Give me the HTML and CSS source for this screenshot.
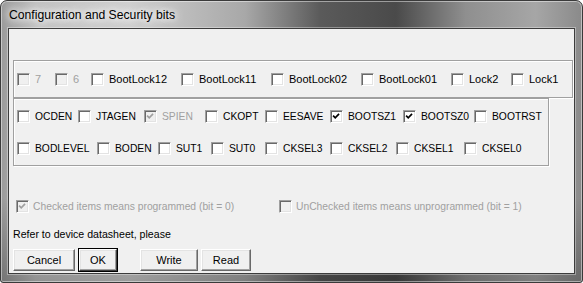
FILE: index.html
```html
<!DOCTYPE html>
<html lang="en">
<head>
  <meta charset="UTF-8">
  <title>Configuration and Security bits</title>
  <link rel="stylesheet" href="styles.css">
</head>
<body>
  <div class="window">
    <div class="titlebar">
      <span class="title">Configuration and Security bits</span>
    </div>

    <div class="client">
      <!-- Lock bits -->
      <div class="group group-lock">
        <label class="item disabled"><span class="cb"></span>7</label>
        <label class="item disabled"><span class="cb"></span>6</label>
        <label class="item"><span class="cb"></span>BootLock12</label>
        <label class="item"><span class="cb"></span>BootLock11</label>
        <label class="item"><span class="cb"></span>BootLock02</label>
        <label class="item"><span class="cb"></span>BootLock01</label>
        <label class="item"><span class="cb"></span>Lock2</label>
        <label class="item"><span class="cb"></span>Lock1</label>
      </div>

      <!-- Fuse bits -->
      <div class="group group-fuse">
        <div class="fuse-row row-high">
          <label class="item"><span class="cb"></span>OCDEN</label>
          <label class="item"><span class="cb"></span>JTAGEN</label>
          <label class="item disabled"><span class="cb"><svg viewBox="0 0 13 13"><polyline points="2.5,5.5 5,8 9.5,3.5"/></svg></span>SPIEN</label>
          <label class="item"><span class="cb"></span>CKOPT</label>
          <label class="item"><span class="cb"></span>EESAVE</label>
          <label class="item"><span class="cb"><svg viewBox="0 0 13 13"><polyline points="2.5,5.5 5,8 9.5,3.5"/></svg></span>BOOTSZ1</label>
          <label class="item"><span class="cb"><svg viewBox="0 0 13 13"><polyline points="2.5,5.5 5,8 9.5,3.5"/></svg></span>BOOTSZ0</label>
          <label class="item"><span class="cb"></span>BOOTRST</label>
        </div>
        <div class="fuse-row row-low">
          <label class="item"><span class="cb"></span>BODLEVEL</label>
          <label class="item"><span class="cb"></span>BODEN</label>
          <label class="item"><span class="cb"></span>SUT1</label>
          <label class="item"><span class="cb"></span>SUT0</label>
          <label class="item"><span class="cb"></span>CKSEL3</label>
          <label class="item"><span class="cb"></span>CKSEL2</label>
          <label class="item"><span class="cb"></span>CKSEL1</label>
          <label class="item"><span class="cb"></span>CKSEL0</label>
        </div>
      </div>

      <!-- Legend -->
      <div class="legend">
        <label class="item disabled"><span class="cb"><svg viewBox="0 0 13 13"><polyline points="2.5,5.5 5,8 9.5,3.5"/></svg></span>Checked items means programmed (bit = 0)</label>
        <label class="item disabled"><span class="cb"></span>UnChecked items means unprogrammed (bit = 1)</label>
      </div>

      <p class="note">Refer to device datasheet, please</p>

      <div class="buttons">
        <button class="btn btn-cancel">Cancel</button>
        <button class="btn btn-ok default">OK</button>
        <button class="btn btn-write">Write</button>
        <button class="btn btn-read">Read</button>
      </div>
    </div>
  </div>
</body>
</html>
```

FILE: styles.css
```css
/* Global styling */
* {
  margin: 0;
  padding: 0;
  box-sizing: border-box;
}

body {
  width: 583px;
  height: 283px;
  background: #fff;
  font-family: 'Liberation Sans', Arial, sans-serif;
  font-size: 11px;
  color: #000;
  overflow: hidden;
}

/* Window frame */
.window {
  width: 583px;
  height: 283px;
  padding: 0 7px 9px;
  border: 1px solid #3a3a3a;
  border-radius: 7px 7px 3px 3px;
  background:
    linear-gradient(to bottom, rgba(255, 255, 255, 0) 0, rgba(255, 255, 255, 0) 70%, rgba(0, 0, 0, 0.25) 100%),
    linear-gradient(to right, #9a9a9a 0, #c2c2c2 6%, #cfcfcf 22%, #a8a8a8 42%, #5a5a5a 55%, #4a4a4a 68%, #8f8f8f 80%, #a6a6a6 92%, #8a8a8a 100%);
  box-shadow: inset 0 0 0 1px rgba(255, 255, 255, 0.45);
}

.titlebar {
  height: 27px;
  display: flex;
  align-items: center;
  padding-left: 1px;
}

.title {
  font-size: 12.2px;
  color: #000;
  text-shadow: 0 0 6px #fff, 0 0 10px #fff, 0 0 14px #eee;
}

.client {
  height: 246px;
  border: 1px solid #3c3c3c;
  background: #f0f0f0;
  box-shadow: 0 0 0 1px rgba(255, 255, 255, 0.35);
  padding-left: 4px;
}

/* Etched group boxes */
.group {
  border: 1px solid #a0a0a0;
  box-shadow: inset 1px 1px 0 #fff, 1px 1px 0 #fff;
}

.group-lock {
  margin-top: 31px;
  width: 560px;
  height: 38px;
  padding-left: 3px;
  display: grid;
  grid-template-columns: 38px 36px 90px 90px 90px 90px 60px auto;
  align-items: center;
}

.group-fuse {
  width: 536px;
  height: 68px;
  padding: 9px 0 0 3px;
  display: flex;
  flex-direction: column;
  gap: 16px;
  font-size: 10.3px;
}

.fuse-row {
  display: grid;
  height: 16px;
  align-items: center;
}

.row-high {
  grid-template-columns: 61px 66px 61px 60px 65px 73px 71px auto;
}

.row-low {
  grid-template-columns: 80px 61px 53px 54px 65px 66px 68px auto;
}

/* Checkbox items */
.item {
  display: flex;
  align-items: center;
  gap: 5px;
  white-space: nowrap;
  height: 16px;
}

.item.disabled {
  color: #a0a0a0;
}

.cb {
  width: 13px;
  height: 13px;
  flex-shrink: 0;
  background: #fff;
  border: 1px solid;
  border-color: #a0a0a0 #fff #fff #a0a0a0;
  box-shadow: inset 1px 1px 0 #696969, inset -1px -1px 0 #e3e3e3;
  display: flex;
}

.disabled .cb {
  background: #f0f0f0;
}

.cb svg {
  width: 11px;
  height: 11px;
}

.cb polyline {
  fill: none;
  stroke: #000;
  stroke-width: 2;
}

.disabled .cb polyline {
  stroke: #a0a0a0;
}

.legend {
  margin-top: 32px;
  padding-left: 3px;
  display: grid;
  grid-template-columns: 263px auto;
  font-size: 10.3px;
}

.legend .item {
  gap: 4px;
}

.note {
  margin-top: 13px;
  height: 14px;
  line-height: 14px;
  font-size: 10.6px;
}

/* Buttons */
.buttons {
  margin-top: 8px;
  display: flex;
}

.btn {
  height: 22px;
  font-family: 'Liberation Sans', Arial, sans-serif;
  font-size: 11px;
  color: #000;
  background: #f0f0f0;
  border: 1px solid;
  border-color: #fff #696969 #696969 #fff;
  box-shadow: inset -1px -1px 0 #a0a0a0, inset 1px 1px 0 #e3e3e3;
}

.btn.default {
  outline: 1px solid #000;
  outline-offset: 0;
  border-color: #fff #404040 #404040 #fff;
}

.btn-cancel { width: 62px; }
.btn-ok { width: 38px; margin-left: 4px; }
.btn-write { width: 58px; margin-left: 23px; }
.btn-read { width: 50px; margin-left: 3px; }
```
